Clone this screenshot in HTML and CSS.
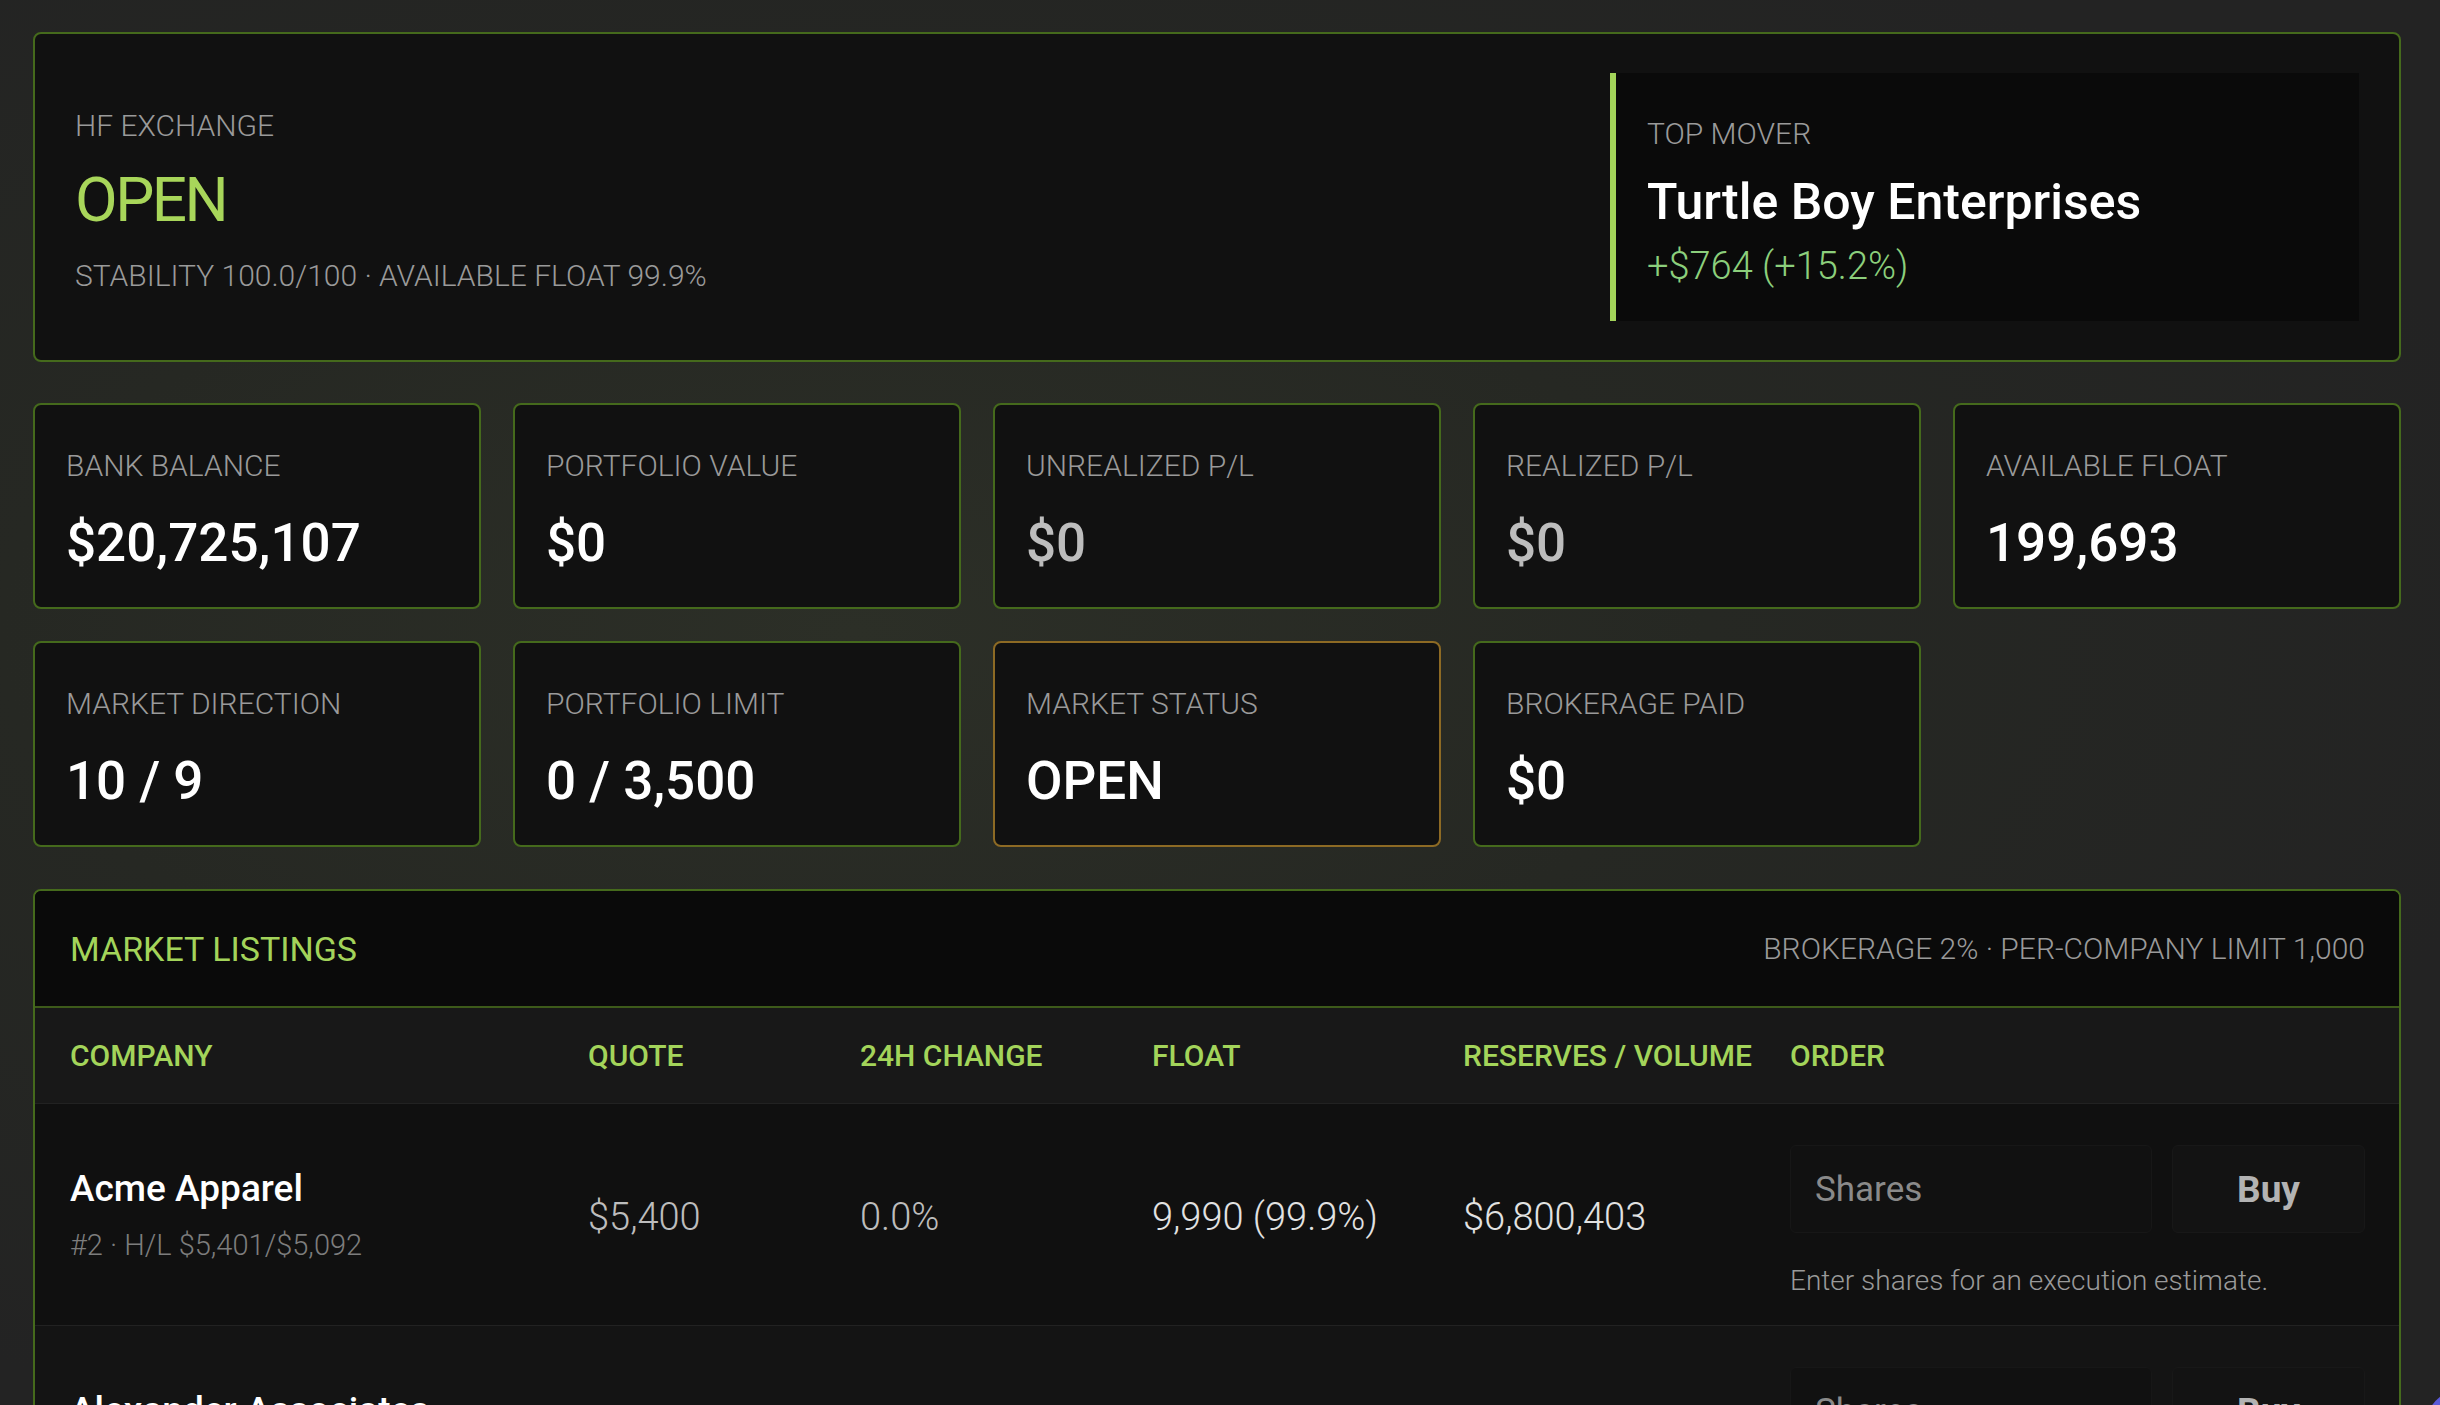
FILE: index.html
```html
<!DOCTYPE html>
<html lang="en">
<head>
<meta charset="utf-8">
<title>HF Exchange</title>
<link rel="stylesheet" href="styles.css">
</head>
<body>
<div class="page">
  <section class="hero">
    <div class="hero-main">
      <div class="label">HF EXCHANGE</div>
      <div class="hero-status">OPEN</div>
      <div class="hero-meta">STABILITY 100.0/100 · AVAILABLE FLOAT 99.9%</div>
    </div>
    <div class="mover">
      <div class="label">TOP MOVER</div>
      <div class="mover-name">Turtle Boy Enterprises</div>
      <div class="mover-change">+$764 (+15.2%)</div>
    </div>
  </section>

  <section class="stats">
    <div class="card"><div class="label">BANK BALANCE</div><div class="value">$20,725,107</div></div>
    <div class="card"><div class="label">PORTFOLIO VALUE</div><div class="value">$0</div></div>
    <div class="card"><div class="label">UNREALIZED P/L</div><div class="value muted">$0</div></div>
    <div class="card"><div class="label">REALIZED P/L</div><div class="value muted">$0</div></div>
    <div class="card"><div class="label">AVAILABLE FLOAT</div><div class="value">199,693</div></div>
    <div class="card"><div class="label">MARKET DIRECTION</div><div class="value">10 / 9</div></div>
    <div class="card"><div class="label">PORTFOLIO LIMIT</div><div class="value">0 / 3,500</div></div>
    <div class="card card-warn"><div class="label">MARKET STATUS</div><div class="value">OPEN</div></div>
    <div class="card"><div class="label">BROKERAGE PAID</div><div class="value">$0</div></div>
  </section>

  <section class="listings">
    <header class="listings-head">
      <h2>MARKET LISTINGS</h2>
      <span class="listings-meta">BROKERAGE 2% · PER-COMPANY LIMIT 1,000</span>
    </header>
    <div class="table">
      <div class="row row-head">
        <div>COMPANY</div>
        <div>QUOTE</div>
        <div>24H CHANGE</div>
        <div>FLOAT</div>
        <div>RESERVES / VOLUME</div>
        <div>ORDER</div>
      </div>
      <div class="row">
        <div class="company">
          <div class="company-name">Acme Apparel</div>
          <div class="company-sub">#2 · H/L $5,401/$5,092</div>
        </div>
        <div class="num dim">$5,400</div>
        <div class="num dim">0.0%</div>
        <div class="num">9,990 (99.9%)</div>
        <div class="num">$6,800,403</div>
        <div class="order">
          <div class="order-controls">
            <input class="shares" type="text" placeholder="Shares">
            <button class="buy" type="button">Buy</button>
          </div>
          <div class="order-note">Enter shares for an execution estimate.</div>
        </div>
      </div>
      <div class="row">
        <div class="company">
          <div class="company-name">Alexander Associates</div>
          <div class="company-sub">#3 · H/L $4,212/$3,987</div>
        </div>
        <div class="num dim">$4,105</div>
        <div class="num dim">0.0%</div>
        <div class="num">9,994 (99.9%)</div>
        <div class="num">$5,120,880</div>
        <div class="order">
          <div class="order-controls">
            <input class="shares" type="text" placeholder="Shares">
            <button class="buy" type="button">Buy</button>
          </div>
          <div class="order-note">Enter shares for an execution estimate.</div>
        </div>
      </div>
    </div>
  </section>
</div>
<div class="fab"></div>
</body>
</html>
```

FILE: styles.css
```css
* { box-sizing: border-box; }

html, body {
  margin: 0;
  padding: 0;
}

body {
  font-family: Roboto, "Liberation Sans", sans-serif;
  color: #ffffff;
  background: #232323;
  background-image: radial-gradient(ellipse 70% 60% at 35% 45%, #2c2f27 0%, #262823 50%, #232323 100%);
  background-attachment: fixed;
  min-height: 100vh;
}

.page {
  padding: 32px 39px 40px 33px;
}

.label {
  font-size: 30px;
  font-weight: 300;
  line-height: 36px;
  color: #9a9a9a;
}

/* hero */
.hero {
  display: flex;
  align-items: center;
  justify-content: space-between;
  border: 2px solid #456a1c;
  border-radius: 8px;
  background: #111111;
  padding: 39px 40px;
}

.hero-main {
  display: flex;
  flex-direction: column;
  padding-top: 8px;
}

.hero-status {
  font-size: 62px;
  line-height: 72px;
  font-weight: 400;
  color: #a8d65a;
  letter-spacing: -2.5px;
  margin-top: 20px;
}

.hero-meta {
  font-size: 30px;
  font-weight: 300;
  line-height: 36px;
  color: #9a9a9a;
  margin-top: 22px;
}

.mover {
  width: 749px;
  background: #0a0a0a;
  border-left: 6px solid #a3d45a;
  padding: 43px 40px 33px 31px;
}

.mover-name {
  font-size: 50px;
  font-weight: 500;
  line-height: 60px;
  color: #ffffff;
  margin-top: 20px;
}

.mover-change {
  font-size: 38px;
  font-weight: 300;
  line-height: 44px;
  color: #8ccf7c;
  margin-top: 12px;
}

/* stat cards */
.stats {
  display: grid;
  grid-template-columns: repeat(5, 1fr);
  gap: 32px;
  margin-top: 41px;
}

.card {
  border: 2px solid #456a1c;
  border-radius: 8px;
  background: #111111;
  padding: 43px 31px 32px;
}

.card-warn {
  border-color: #8d6a24;
}

.value {
  font-size: 53px;
  font-weight: 500;
  line-height: 64px;
  color: #ffffff;
  margin-top: 27px;
}

.value.muted {
  color: #bdbdbd;
}

/* listings */
.listings {
  margin-top: 42px;
  border: 2px solid #456a1c;
  border-radius: 8px;
  background: #101010;
  overflow: hidden;
}

.listings-head {
  display: flex;
  align-items: center;
  justify-content: space-between;
  height: 117px;
  padding: 0 34px 0 35px;
  background: #0a0a0a;
  border-bottom: 2px solid #3d5a1a;
}

.listings-head h2 {
  margin: 0;
  font-size: 34px;
  font-weight: 400;
  line-height: 40px;
  color: #a3d45a;
}

.listings-meta {
  font-size: 30px;
  font-weight: 300;
  line-height: 36px;
  color: #9a9a9a;
}

.row {
  display: grid;
  grid-template-columns: 518px 272px 292px 311px 327px minmax(0, 1fr);
  align-items: center;
  padding: 41px 34px 27px 35px;
  border-bottom: 1px solid #222222;
  background: #101010;
}

.row:nth-child(odd) {
  background: #141414;
}

.row.row-head {
  height: 96px;
  padding-top: 0;
  padding-bottom: 0;
  background: #181818;
  font-size: 30px;
  font-weight: 500;
  line-height: 36px;
  color: #a3d45a;
}

.company {
  margin-bottom: 14px;
}

.company-name {
  font-size: 37px;
  font-weight: 500;
  line-height: 44px;
  color: #ffffff;
}

.company-sub {
  font-size: 29px;
  font-weight: 300;
  line-height: 35px;
  color: #7d7d7d;
  margin-top: 17px;
}

.num {
  font-size: 38px;
  font-weight: 300;
  line-height: 45px;
  color: #e2e2e2;
  margin-bottom: 8px;
}

.num.dim {
  color: #bdbdbd;
}

.order {
  min-width: 0;
}

.order-controls {
  display: flex;
  gap: 20px;
}

.shares {
  flex: 1 1 0;
  width: 0;
  min-width: 0;
  height: 88px;
  padding: 0 24px;
  background: #111111;
  border: 1px solid #171717;
  border-radius: 6px;
  font-family: Roboto, "Liberation Sans", sans-serif;
  font-size: 35px;
  font-weight: 400;
  color: #dddddd;
  outline: none;
}

.shares::placeholder {
  color: #8a8a8a;
}

.buy {
  flex: 0 0 193px;
  height: 88px;
  background: #131313;
  border: 1px solid #181818;
  border-radius: 6px;
  font-family: Roboto, "Liberation Sans", sans-serif;
  font-size: 37px;
  font-weight: 700;
  color: #b3b3b3;
  cursor: pointer;
}

.order-note {
  font-size: 28px;
  font-weight: 300;
  line-height: 35px;
  color: #9a9a9a;
  margin-top: 30px;
}

.fab {
  position: fixed;
  right: -52px;
  bottom: -52px;
  width: 66px;
  height: 66px;
  border-radius: 50%;
  background: #5a5ad8;
}
```
